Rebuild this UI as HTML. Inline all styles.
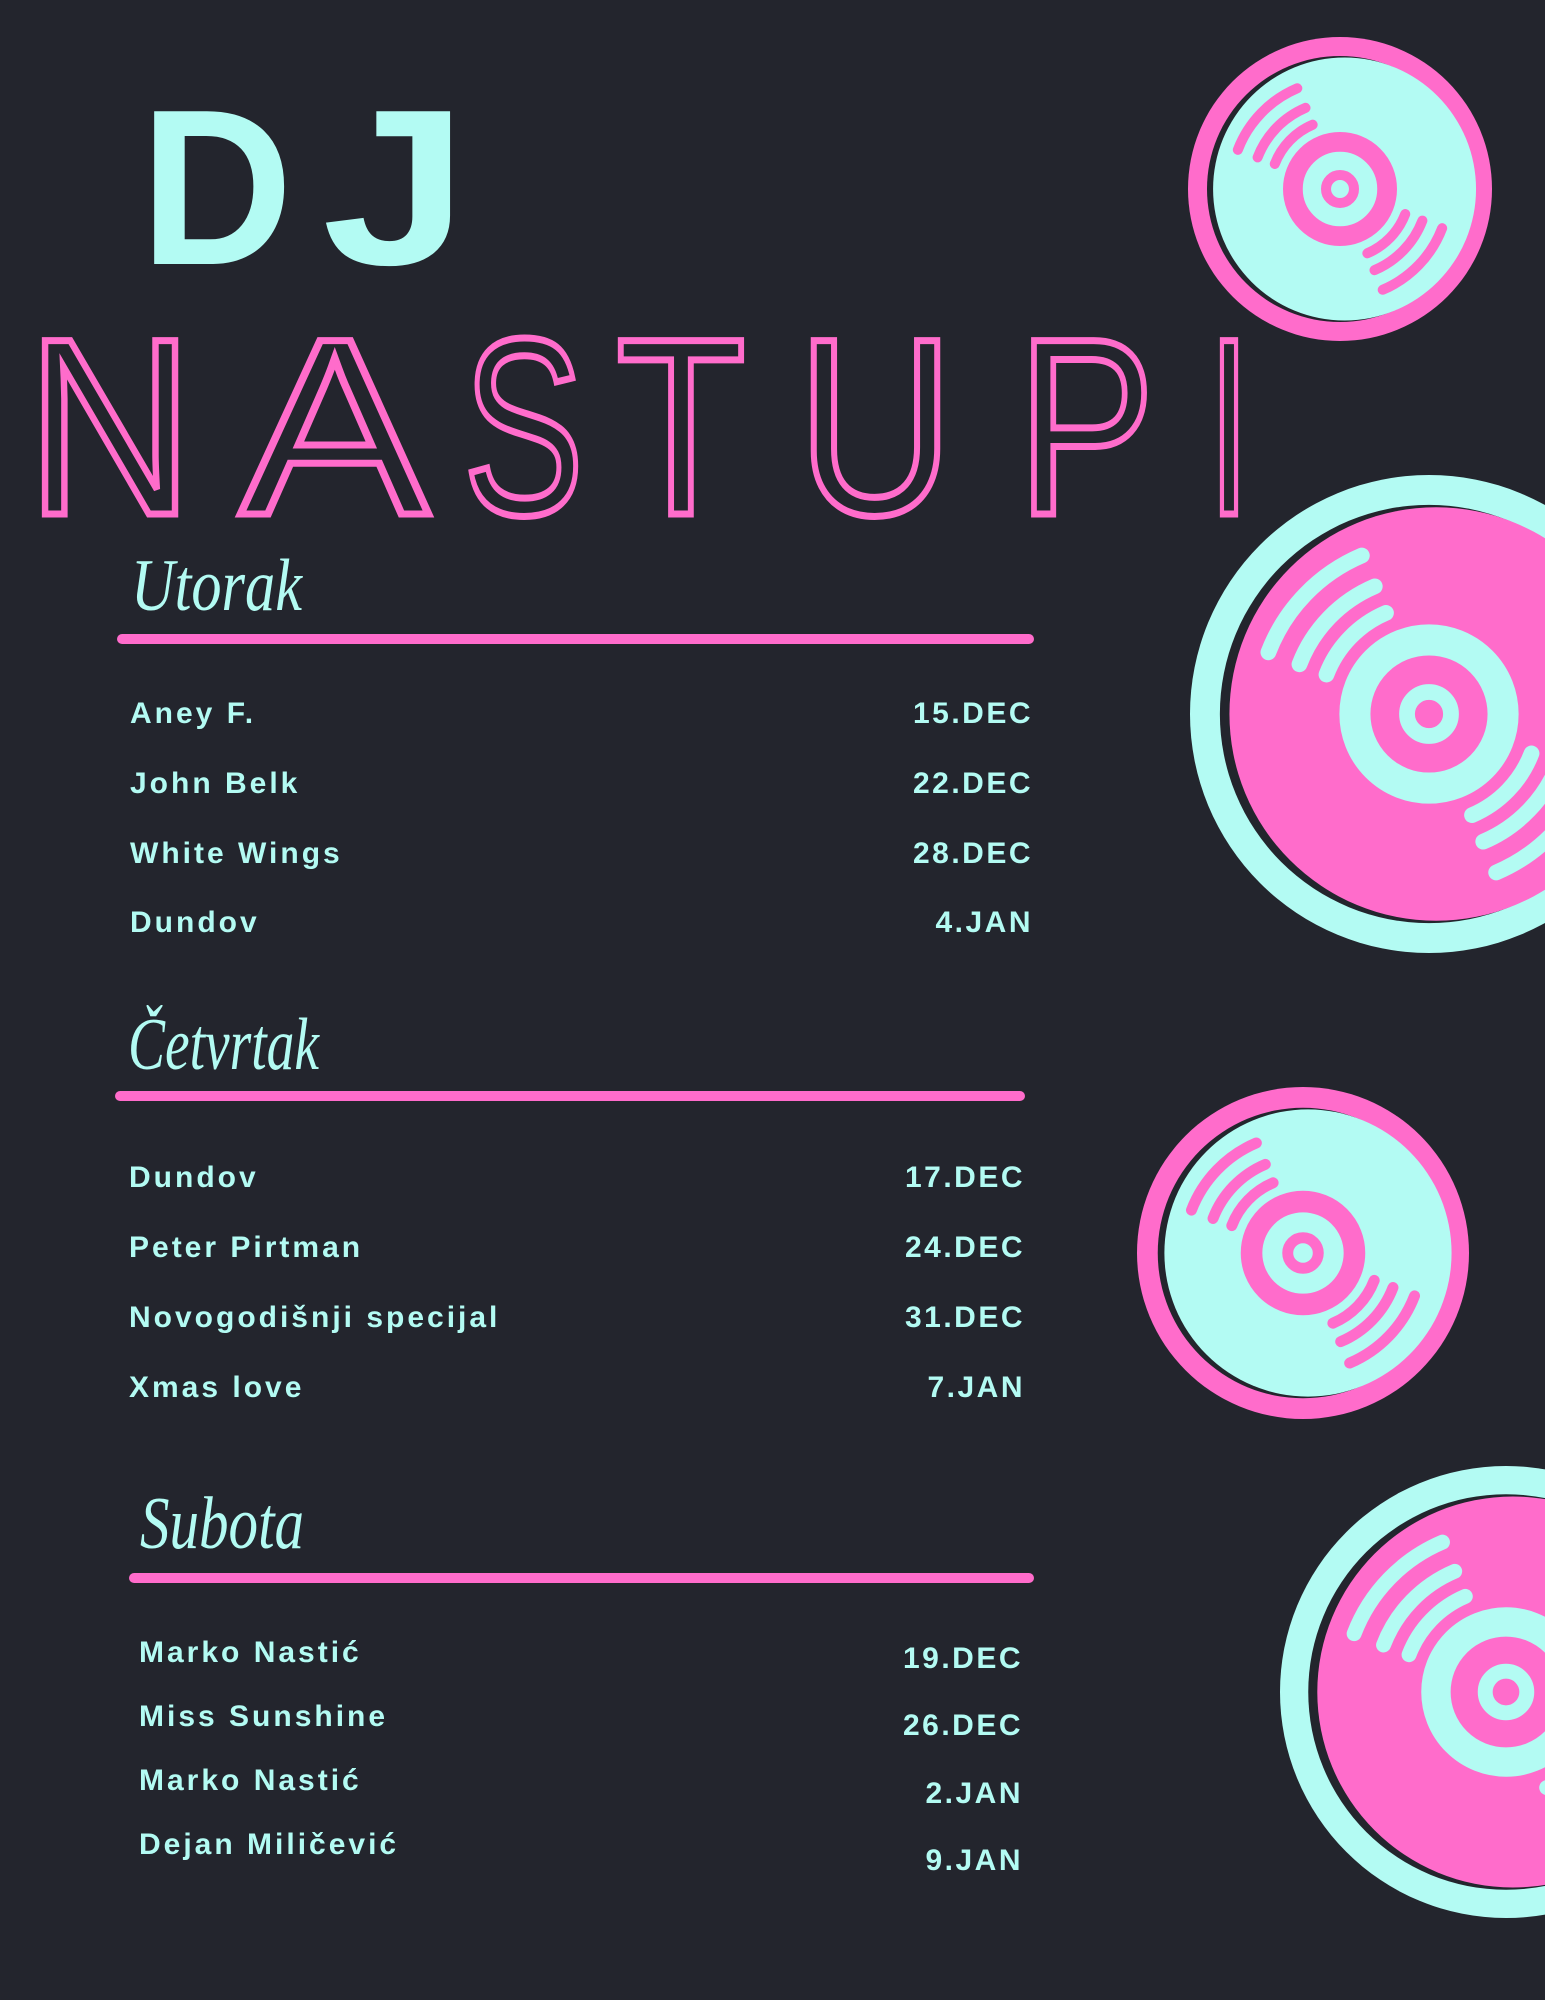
<!DOCTYPE html>
<html><head><meta charset="utf-8"><style>
html,body{margin:0;padding:0;background:#23252d;}
svg{display:block;}
.n{font-family:"Liberation Sans",sans-serif;font-weight:bold;font-size:30px;letter-spacing:3px;fill:#b3fbf3;}
.d{font-family:"Liberation Sans",sans-serif;font-weight:bold;font-size:30px;letter-spacing:2.5px;fill:#b3fbf3;text-anchor:end;}
.s{font-family:"Liberation Serif",serif;font-style:italic;font-size:74px;fill:#b3fbf3;}
.o{font-family:"Liberation Sans",sans-serif;font-size:252px;fill:none;stroke:#ff6ccb;stroke-width:7;}
</style></head><body>
<svg width="1545" height="2000" viewBox="0 0 1545 2000" xmlns="http://www.w3.org/2000/svg">
<rect width="1545" height="2000" fill="#23252d"/>
<!-- vinyl 1 -->
<g transform="translate(1340,189) scale(1.52)">
<circle r="100" fill="#ff6ccb"/><circle r="87.5" fill="#23252d"/><circle cx="3" r="86.5" fill="#b3fbf3"/>
<g fill="none" stroke="#ff6ccb" stroke-linecap="round" stroke-width="6.6">
<circle r="31" stroke-width="13"/><circle r="9.2"/>
<path d="M-67.2,-25.8A72,72 0 0 1 -28.1,-66.3M-54.2,-20.8A58,58 0 0 1 -22.7,-53.4M-42.9,-16.5A46,46 0 0 1 -18,-42.3M67.2,25.8A72,72 0 0 1 28.1,66.3M54.2,20.8A58,58 0 0 1 22.7,53.4M42.9,16.5A46,46 0 0 1 18,42.3"/>
</g></g>
<!-- vinyl 2 -->
<g transform="translate(1429,714) scale(2.39)">
<circle r="100" fill="#b3fbf3"/><circle r="87.5" fill="#23252d"/><circle cx="3" r="86.5" fill="#ff6ccb"/>
<g fill="none" stroke="#b3fbf3" stroke-linecap="round" stroke-width="6.6">
<circle r="31" stroke-width="13"/><circle r="9.2"/>
<path d="M-67.2,-25.8A72,72 0 0 1 -28.1,-66.3M-54.2,-20.8A58,58 0 0 1 -22.7,-53.4M-42.9,-16.5A46,46 0 0 1 -18,-42.3M67.2,25.8A72,72 0 0 1 28.1,66.3M54.2,20.8A58,58 0 0 1 22.7,53.4M42.9,16.5A46,46 0 0 1 18,42.3"/>
</g></g>
<!-- vinyl 3 -->
<g transform="translate(1303,1253) scale(1.66)">
<circle r="100" fill="#ff6ccb"/><circle r="87.5" fill="#23252d"/><circle cx="3" r="86.5" fill="#b3fbf3"/>
<g fill="none" stroke="#ff6ccb" stroke-linecap="round" stroke-width="6.6">
<circle r="31" stroke-width="13"/><circle r="9.2"/>
<path d="M-67.2,-25.8A72,72 0 0 1 -28.1,-66.3M-54.2,-20.8A58,58 0 0 1 -22.7,-53.4M-42.9,-16.5A46,46 0 0 1 -18,-42.3M67.2,25.8A72,72 0 0 1 28.1,66.3M54.2,20.8A58,58 0 0 1 22.7,53.4M42.9,16.5A46,46 0 0 1 18,42.3"/>
</g></g>
<!-- vinyl 4 -->
<g transform="translate(1506,1692) scale(2.26)">
<circle r="100" fill="#b3fbf3"/><circle r="87.5" fill="#23252d"/><circle cx="3" r="86.5" fill="#ff6ccb"/>
<g fill="none" stroke="#b3fbf3" stroke-linecap="round" stroke-width="6.6">
<circle r="31" stroke-width="13"/><circle r="9.2"/>
<path d="M-67.2,-25.8A72,72 0 0 1 -28.1,-66.3M-54.2,-20.8A58,58 0 0 1 -22.7,-53.4M-42.9,-16.5A46,46 0 0 1 -18,-42.3M67.2,25.8A72,72 0 0 1 28.1,66.3M54.2,20.8A58,58 0 0 1 22.7,53.4M42.9,16.5A46,46 0 0 1 18,42.3"/>
</g></g>

<!-- DJ -->
<g font-family="Liberation Sans, sans-serif" font-weight="bold" font-size="222" fill="#b3fbf3">
<text x="140" y="264" textLength="153" lengthAdjust="spacingAndGlyphs">D</text>
<text x="322" y="264" textLength="146" lengthAdjust="spacingAndGlyphs">J</text>
</g>
<!-- NASTUPI -->
<g class="o">
<text x="26" y="514" textLength="168" lengthAdjust="spacingAndGlyphs">N</text>
<text x="240" y="514" textLength="189" lengthAdjust="spacingAndGlyphs">A</text>
<text x="463" y="514" textLength="121" lengthAdjust="spacingAndGlyphs">S</text>
<text x="616" y="514" textLength="130" lengthAdjust="spacingAndGlyphs">T</text>
<text x="797" y="514" textLength="157" lengthAdjust="spacingAndGlyphs">U</text>
<text x="1017" y="514" textLength="138" lengthAdjust="spacingAndGlyphs">P</text>
<text x="1208" y="514" textLength="42" lengthAdjust="spacingAndGlyphs">I</text>
</g>

<!-- Utorak -->
<text class="s" x="131" y="610" textLength="171" lengthAdjust="spacingAndGlyphs">Utorak</text>
<line x1="122" y1="639" x2="1029" y2="639" stroke="#ff6ccb" stroke-width="10" stroke-linecap="round"/>
<text class="n" x="130" y="723">Aney F.</text><text class="d" x="1033" y="723">15.DEC</text>
<text class="n" x="130" y="793">John Belk</text><text class="d" x="1033" y="793">22.DEC</text>
<text class="n" x="130" y="863">White Wings</text><text class="d" x="1033" y="863">28.DEC</text>
<text class="n" x="130" y="932">Dundov</text><text class="d" x="1033" y="932">4.JAN</text>

<!-- Četvrtak -->
<text class="s" x="128" y="1069" textLength="191" lengthAdjust="spacingAndGlyphs">Četvrtak</text>
<line x1="120" y1="1096" x2="1020" y2="1096" stroke="#ff6ccb" stroke-width="10" stroke-linecap="round"/>
<text class="n" x="129" y="1187">Dundov</text><text class="d" x="1025" y="1187">17.DEC</text>
<text class="n" x="129" y="1257">Peter Pirtman</text><text class="d" x="1025" y="1257">24.DEC</text>
<text class="n" x="129" y="1327">Novogodišnji specijal</text><text class="d" x="1025" y="1327">31.DEC</text>
<text class="n" x="129" y="1397">Xmas love</text><text class="d" x="1025" y="1397">7.JAN</text>

<!-- Subota -->
<text class="s" x="140" y="1548" textLength="164" lengthAdjust="spacingAndGlyphs">Subota</text>
<line x1="134" y1="1578" x2="1029" y2="1578" stroke="#ff6ccb" stroke-width="10" stroke-linecap="round"/>
<text class="n" x="139" y="1662">Marko Nastić</text><text class="d" x="1023" y="1668">19.DEC</text>
<text class="n" x="139" y="1726">Miss Sunshine</text><text class="d" x="1023" y="1735">26.DEC</text>
<text class="n" x="139" y="1790">Marko Nastić</text><text class="d" x="1023" y="1803">2.JAN</text>
<text class="n" x="139" y="1854">Dejan Miličević</text><text class="d" x="1023" y="1870">9.JAN</text>
</svg>
</body></html>
